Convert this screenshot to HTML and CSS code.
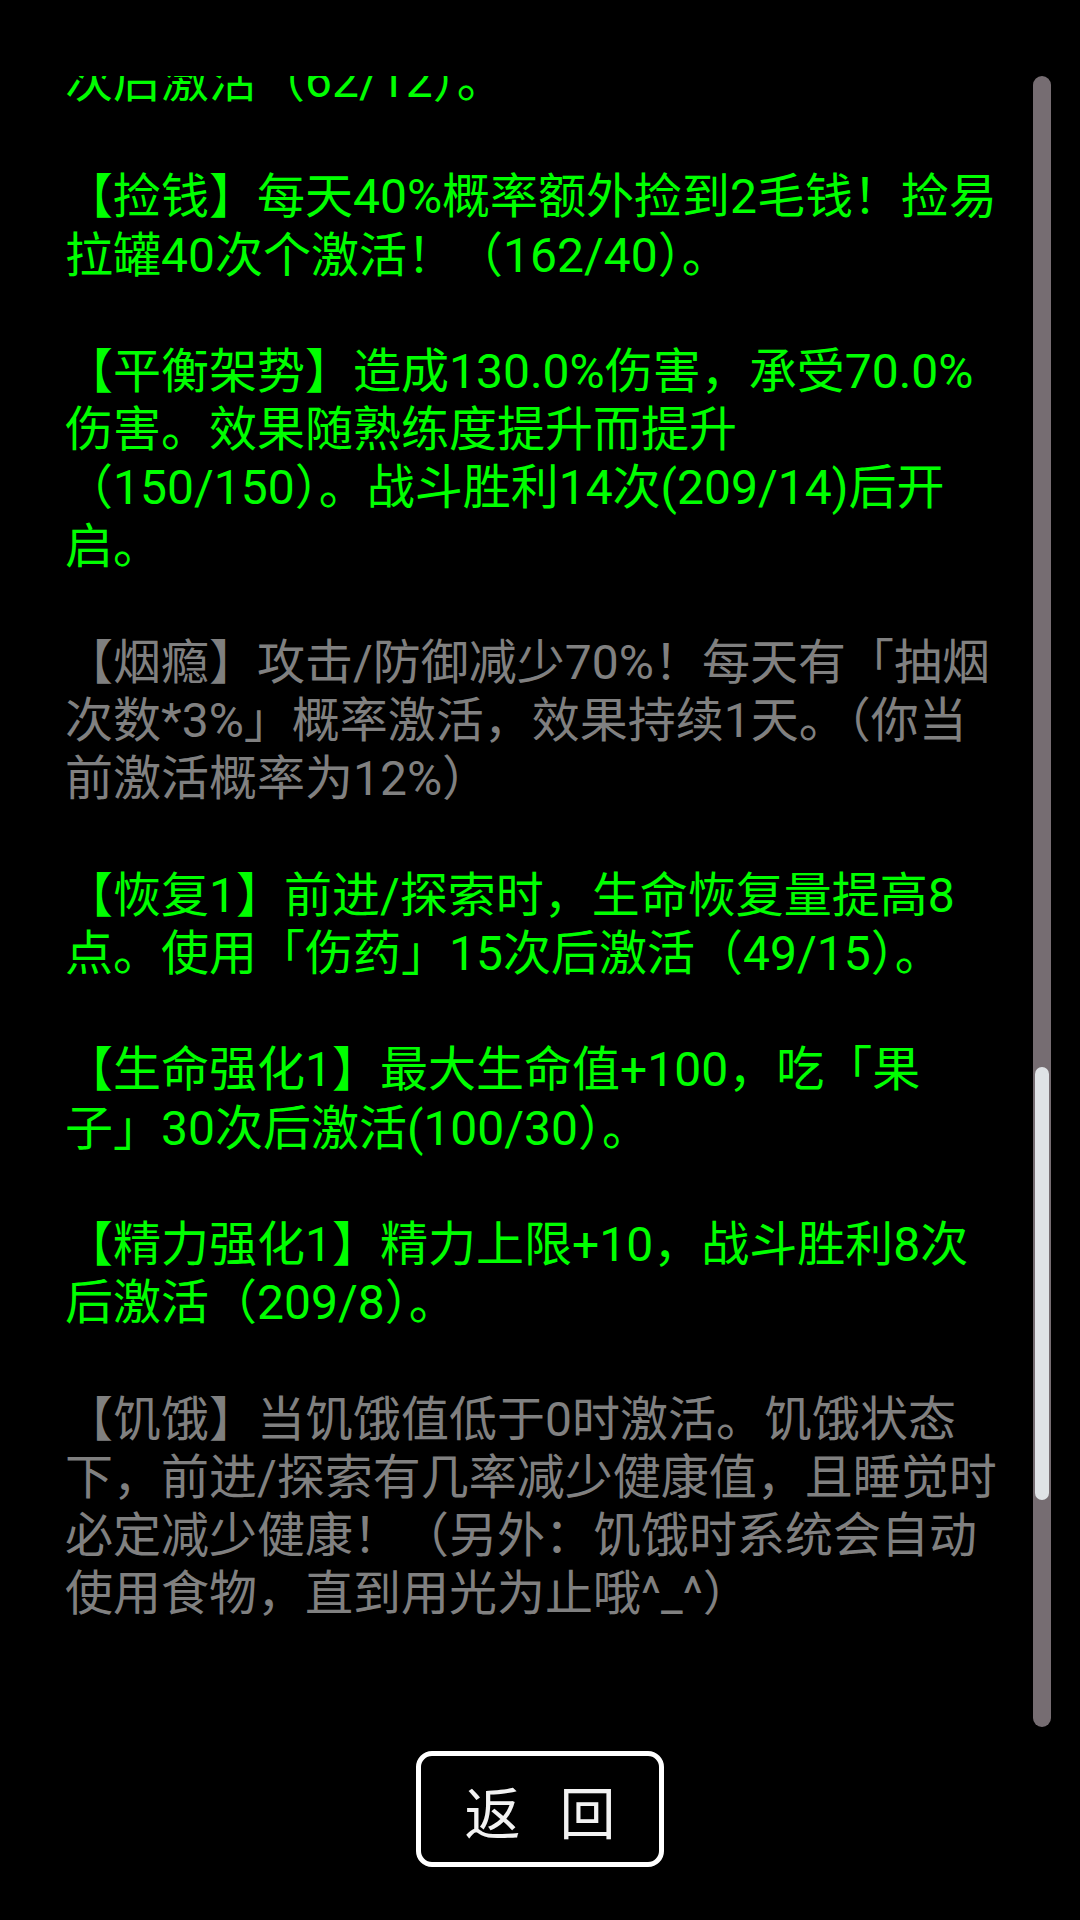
FILE: index.html
```html
<!DOCTYPE html>
<html lang="zh-CN">

<head>
  <meta charset="UTF-8">
  <meta name="viewport" content="width=device-width, initial-scale=1.0">
  <title>技能列表</title>
  <link rel="stylesheet" href="styles.css">
</head>

<body>
  <div class="screen">
    <div class="list">
      <div class="list-text">
        <div class="content">
          <p class="skill on">次后激活（62/12）。</p>
          <p class="skill on">【捡钱】每天40%概率额外捡到2毛钱！捡易<br>拉罐40次个激活！（162/40）。</p>
          <p class="skill on">【平衡架势】造成130.0%伤害，承受70.0%<br>伤害。效果随熟练度提升而提升<br>（150/150）。战斗胜利14次(209/14)后开<br>启。</p>
          <p class="skill off">【烟瘾】攻击/防御减少70%！每天有「抽烟<br>次数*3%」概率激活，效果持续1天。（你当<br>前激活概率为12%）</p>
          <p class="skill on">【恢复1】前进/探索时，生命恢复量提高8<br>点。使用「伤药」15次后激活（49/15）。</p>
          <p class="skill on">【生命强化1】最大生命值+100，吃「果<br>子」30次后激活(100/30）。</p>
          <p class="skill on">【精力强化1】精力上限+10，战斗胜利8次<br>后激活（209/8）。</p>
          <p class="skill off">【饥饿】当饥饿值低于0时激活。饥饿状态<br>下，前进/探索有几率减少健康值，且睡觉时<br>必定减少健康！（另外：饥饿时系统会自动<br>使用食物，直到用光为止哦^_^）</p>
        </div>
      </div>
      <div class="scrollbar">
        <div class="thumb"></div>
      </div>
    </div>

    <div class="footer">
      <button class="back-btn">返回</button>
    </div>
  </div>
</body>

</html>
```

FILE: styles.css
```css
body {
  margin: 0;
  background-color: #000;
  font-family: Roboto, "Noto Sans CJK SC", sans-serif;
}

.screen {
  width: 1080px;
  height: 1920px;
  display: flex;
  flex-direction: column;
}

.list {
  display: flex;
  margin-top: 76px;
  height: 1651px;
}

.list-text {
  flex: 1;
  overflow: hidden;
  padding-left: 65px;
}

.content {
  margin-top: -24px;
}

.skill {
  margin: 0 0 58.2px 0;
  font-size: 48px;
  line-height: 58.2px;
  white-space: nowrap;
}

.skill.on {
  color: #00ff00;
}

.skill.off {
  color: #808080;
}

.scrollbar {
  width: 18px;
  margin-right: 29px;
  background-color: #766d72;
  border-radius: 9px;
  display: flex;
  justify-content: center;
}

.thumb {
  width: 14px;
  height: 433px;
  margin-top: 991px;
  background-color: #dfe3e6;
  border-radius: 7px;
}

.footer {
  display: flex;
  justify-content: center;
  padding-top: 24px;
}

.back-btn {
  width: 248px;
  height: 116px;
  border: 5px solid #fff;
  border-radius: 16px;
  background-color: #000;
  color: #f2f2f2;
  font-family: "Noto Sans CJK SC", sans-serif;
  font-size: 56px;
  letter-spacing: 39px;
  text-indent: 39px;
  padding: 0;
}
```
